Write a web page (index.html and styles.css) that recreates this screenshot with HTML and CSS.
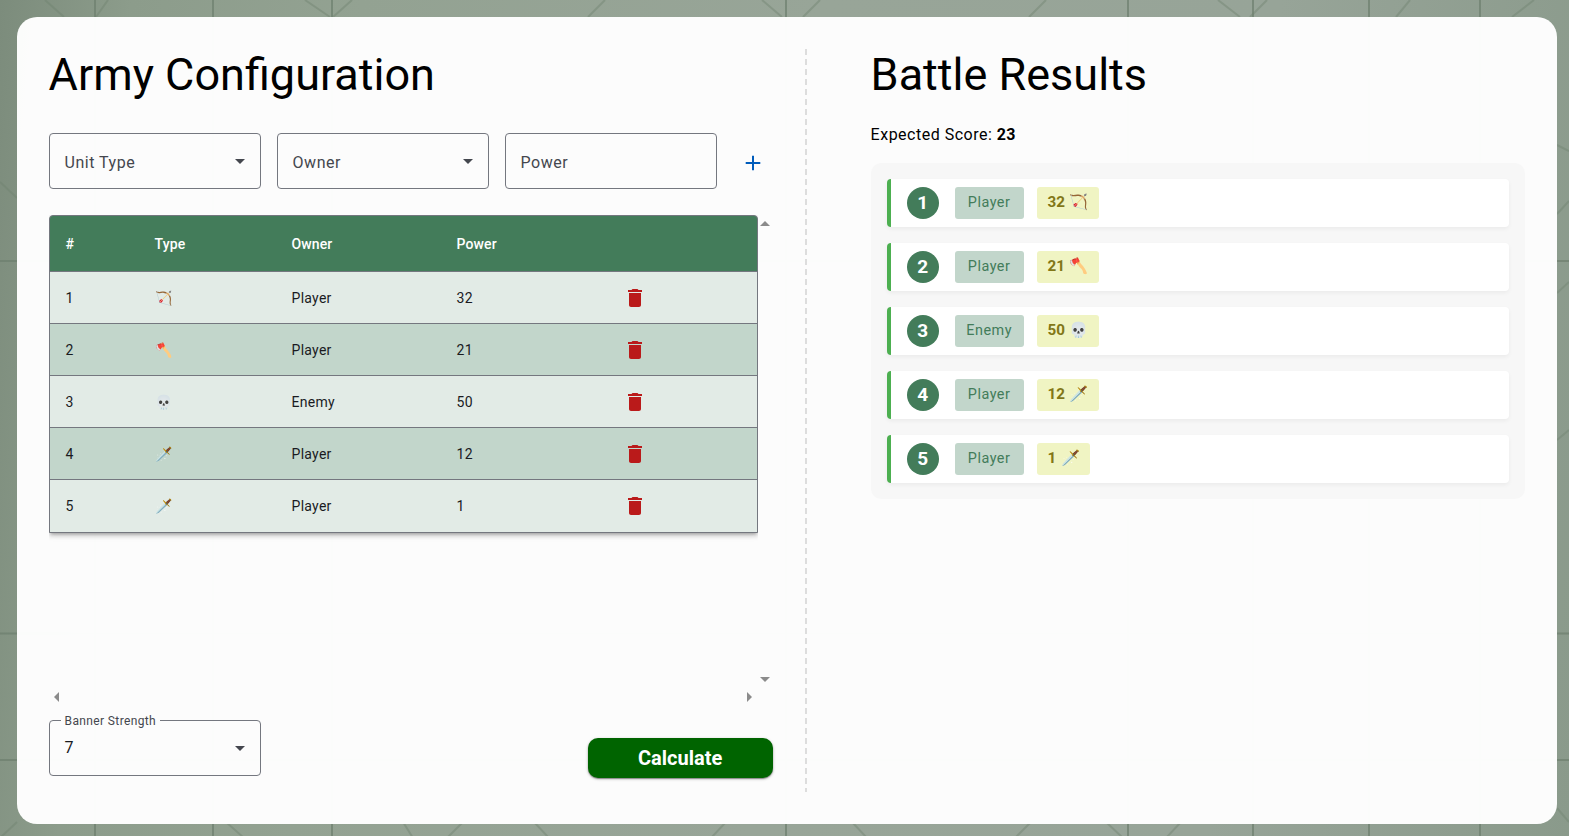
FILE: index.html
```html
<!DOCTYPE html>
<html lang="en">
<head>
<meta charset="utf-8">
<title>Army Configuration</title>
<link rel="stylesheet" href="styles.css">
</head>
<body>
<svg class="backdrop" viewBox="0 0 1569 836" preserveAspectRatio="none" aria-hidden="true">
  <g fill="none" stroke="#6d7f6e" stroke-width="2" opacity=".7">
    <path d="M95 0V836M213 0V836M332 0V836M786 0V836M1128 0V836M1253 0V836M1369 0V836M1480 0V836"/>
    <path d="M0 261H1569M0 633.500H1569M0 760H1569"/>
  </g>
  <g fill="none" stroke="#6f826f" stroke-width="2" opacity=".42">
    <path d="M45 0L64 17M108 0L96 17M305 0L330 17M352 0L333 17M605 0L588 17M762 0L782 17M820 0L803 17M1046 0L1029 17M1218 0L1240 17M1267 0L1250 17M1410 0L1396 17M1534 0L1512 17"/>
    <path d="M17 822L0 838M226 822L244 838M403 822L413 838M463 822L447 838M534 822L549 838M726 822L711 838M852 822L867 838M1031 822L1015 838M1106 822L1123 838M1181 822L1166 838"/>
    <path d="M1557 145L1569 151M1557 214L1569 201M1557 293L1569 282M1557 440L1569 430M1557 808L1569 822M0 182L17 198"/>
  </g>
</svg>
<main class="card">
  <section class="config">
    <h1>Army Configuration</h1>
    <form class="unit-form">
      <div class="field"><span>Unit Type</span><i class="caret"></i></div>
      <div class="field"><span>Owner</span><i class="caret"></i></div>
      <div class="field"><span>Power</span></div>
      <button type="button" class="add" aria-label="Add"><svg width="24" height="24" viewBox="0 0 24 24"><path d="M11 13H4.700v-2H11V4.700h2V11h6.300v2H13v6.300h-2z" fill="#005cbb"/></svg></button>
    </form>
    <div class="table-area">
      <div class="viewport">
        <table>
          <colgroup><col class="c1"><col class="c2"><col class="c3"><col class="c4"><col class="c5"></colgroup>
          <thead><tr><th>#</th><th>Type</th><th>Owner</th><th>Power</th><th></th></tr></thead>
          <tbody>
            <tr><td>1</td><td class="unit">🏹</td><td>Player</td><td>32</td><td><svg class="trash" viewBox="0 0 24 24"><path d="M6 19c0 1.100.9 2 2 2h8c1.100 0 2-.9 2-2V7H6zM19 4h-3.500l-1-1h-5l-1 1H5v2h14z"/></svg></td></tr>
            <tr><td>2</td><td class="unit">🪓</td><td>Player</td><td>21</td><td><svg class="trash" viewBox="0 0 24 24"><path d="M6 19c0 1.100.9 2 2 2h8c1.100 0 2-.9 2-2V7H6zM19 4h-3.500l-1-1h-5l-1 1H5v2h14z"/></svg></td></tr>
            <tr><td>3</td><td class="unit">💀</td><td>Enemy</td><td>50</td><td><svg class="trash" viewBox="0 0 24 24"><path d="M6 19c0 1.100.9 2 2 2h8c1.100 0 2-.9 2-2V7H6zM19 4h-3.500l-1-1h-5l-1 1H5v2h14z"/></svg></td></tr>
            <tr><td>4</td><td class="unit">🗡️</td><td>Player</td><td>12</td><td><svg class="trash" viewBox="0 0 24 24"><path d="M6 19c0 1.100.9 2 2 2h8c1.100 0 2-.9 2-2V7H6zM19 4h-3.500l-1-1h-5l-1 1H5v2h14z"/></svg></td></tr>
            <tr><td>5</td><td class="unit">🗡️</td><td>Player</td><td>1</td><td><svg class="trash" viewBox="0 0 24 24"><path d="M6 19c0 1.100.9 2 2 2h8c1.100 0 2-.9 2-2V7H6zM19 4h-3.500l-1-1h-5l-1 1H5v2h14z"/></svg></td></tr>
          </tbody>
        </table>
      </div>
      <div class="bar-v"><i class="up"></i><i class="down"></i></div>
      <div class="bar-h"><i class="left"></i><i class="right"></i></div>
    </div>
    <div class="actions">
      <fieldset class="banner"><legend>Banner Strength</legend><span>7</span><i class="caret"></i></fieldset>
      <button type="button" class="calculate">Calculate</button>
    </div>
  </section>
  <div class="divider"></div>
  <section class="results">
    <h1>Battle Results</h1>
    <p class="score">Expected Score: <strong>23</strong></p>
    <ol class="list">
      <li><b class="rank">1</b><span class="owner">Player</span><span class="power">32 <i>🏹</i></span></li>
      <li><b class="rank">2</b><span class="owner">Player</span><span class="power">21 <i>🪓</i></span></li>
      <li><b class="rank">3</b><span class="owner">Enemy</span><span class="power">50 <i>💀</i></span></li>
      <li><b class="rank">4</b><span class="owner">Player</span><span class="power">12 <i>🗡️</i></span></li>
      <li><b class="rank">5</b><span class="owner">Player</span><span class="power">1 <i>🗡️</i></span></li>
    </ol>
  </section>
</main>
</body>
</html>
```

FILE: styles.css
```css
* { box-sizing: border-box; }
body {
  margin: 0;
  height: 836px;
  padding: 17px 12px 12px 16.6px;
  overflow: hidden;
  font-family: Roboto, "Noto Color Emoji", sans-serif;
  background: linear-gradient(95deg, #7c8c7c 0, #8c9c8b 8%, #93a292 22%, #98a598 50%, #97a498 78%, #8a9a8b 100%);
}
.backdrop { position: absolute; left: 0; top: 0; width: 1569px; height: 836px; }
.card {
  position: relative;
  display: flex;
  height: 807px;
  padding: 32px;
  border-radius: 20px;
  background: rgba(253, 253, 253, .99);
}
h1 { margin: 0; font-size: 45px; line-height: 52px; font-weight: 400; color: #000; }
.config { flex: none; width: 724px; }
.unit-form { display: flex; gap: 16px; margin-top: 32px; align-items: center; }
.field {
  display: flex;
  align-items: center;
  justify-content: space-between;
  width: 212px;
  height: 56px;
  padding: 2px 15px 0;
  border: 1px solid #74777f;
  border-radius: 4px;
  font-size: 16px;
  letter-spacing: .5px;
  color: #44474e;
}
.caret { width: 0; height: 0; border: 5px solid transparent; border-top-color: #44474e; border-bottom: 0; }
.field .caret { margin-bottom: 1px; }
.add { width: 40px; height: 40px; padding: 10px 8px 6px; border: 0; background: none; }
.add svg { display: block; }
.table-area {
  display: grid;
  grid-template-columns: 709px 15px;
  grid-template-rows: 473px 15px;
  margin-top: 26px;
}
.viewport { overflow: hidden; }
table {
  width: 709px;
  table-layout: fixed;
  border: 1px solid #74777f;
  border-radius: 4px 4px 0 0;
  border-spacing: 0;
  box-shadow: 0 3px 3px -2px rgba(0,0,0,.2), 0 3px 4px rgba(0,0,0,.14), 0 1px 8px rgba(0,0,0,.12);
  background: #437c5a;
  font-size: 14px;
  line-height: 20px;
  letter-spacing: .25px;
  color: #1a1b1f;
}
.c1 { width: 89px; } .c2 { width: 137px; } .c3 { width: 165px; } .c4 { width: 170px; }
th, td { padding: 0 16px; text-align: left; border-bottom: 1px solid #74777f; }
th { height: 56px; color: #fff; font-weight: 500; letter-spacing: .1px; }
td { height: 52px; }
td.unit { padding-left: 16.4px; }
tbody tr { background: #e2ebe6; }
tbody tr:nth-child(even) { background: #c2d6cb; }
tbody tr:last-child td { border-bottom: 0; }
.trash { display: block; width: 24px; height: 24px; margin-left: -4px; fill: #ba1a1a; }
.bar-v, .bar-h { display: flex; justify-content: space-between; }
.bar-v { flex-direction: column; align-items: center; padding: 6px 0; }
.bar-h { align-items: center; padding: 2px 6px 0 5px; }
.bar-v i, .bar-h i { width: 0; height: 0; border: 5px solid transparent; }
.up { border-top: 0 !important; border-bottom-color: #8b8b8b !important; }
.down { border-bottom: 0 !important; border-top-color: #8b8b8b !important; }
.left { border-left: 0 !important; border-right-color: #8b8b8b !important; }
.right { border-right: 0 !important; border-left-color: #8b8b8b !important; }
.actions { display: flex; justify-content: space-between; margin-top: 10px; }
.banner {
  display: flex;
  justify-content: space-between;
  width: 212px;
  height: 63px;
  margin: 0;
  padding: 9px 15px 0 11px;
  border: 1px solid #74777f;
  border-radius: 4px;
  font-size: 16px;
  line-height: 24px;
  color: #1a1b1f;
}
.banner legend { height: 14px; padding: 0 4px; font-size: 12px; line-height: 16px; letter-spacing: .37px; color: #44474e; }
.banner span { padding-left: 4px; }
.banner .caret { margin-top: 10px; }
.calculate {
  width: 185px;
  height: 40px;
  margin-top: 25px;
  padding: 0;
  border: 0;
  border-radius: 10px;
  background: #006400;
  box-shadow: 0 1px 3px rgba(0,0,0,.3), 0 1px 1px rgba(0,0,0,.3);
  font: 700 20px/40px Roboto, sans-serif;
  color: #fff;
}
.divider {
  flex: none;
  width: 2px;
  height: 743px;
  margin: 0 64px 0 32px;
  background: repeating-linear-gradient(#ddd 0 6px, transparent 6px 9.98px);
}
.results { flex: none; width: 654px; }
.score { margin: 22px 0 16px; font-size: 16px; line-height: 24px; letter-spacing: .5px; }
.score strong { letter-spacing: .3px; }
.list {
  display: flex;
  flex-direction: column;
  gap: 16px;
  margin: 0;
  padding: 16px;
  border-radius: 10px;
  background: #f7f7f7;
  list-style: none;
}
.list li {
  display: flex;
  align-items: center;
  height: 48px;
  padding-left: 16px;
  border-left: 4px solid #4caf50;
  border-radius: 4px;
  background: #fff;
  box-shadow: 0 2px 4px rgba(0,0,0,.05);
}
.rank {
  width: 32px;
  height: 32px;
  border-radius: 50%;
  background: #437c5a;
  color: #fff;
  font-size: 19px;
  line-height: 32px;
  text-align: center;
}
.owner, .power { height: 32px; border-radius: 3px; line-height: 31px; }
.owner { width: 69px; margin: 0 13px 0 16px; background: #c2d6cb; color: #437c5a; font-size: 14.4px; letter-spacing: .5px; text-align: center; }
.power { padding: 0 10px 0 11px; background: #f0f4c3; color: #827717; font-size: 15.2px; font-weight: 700; }
.power i { margin-left: 1px; font-style: normal; }
```
